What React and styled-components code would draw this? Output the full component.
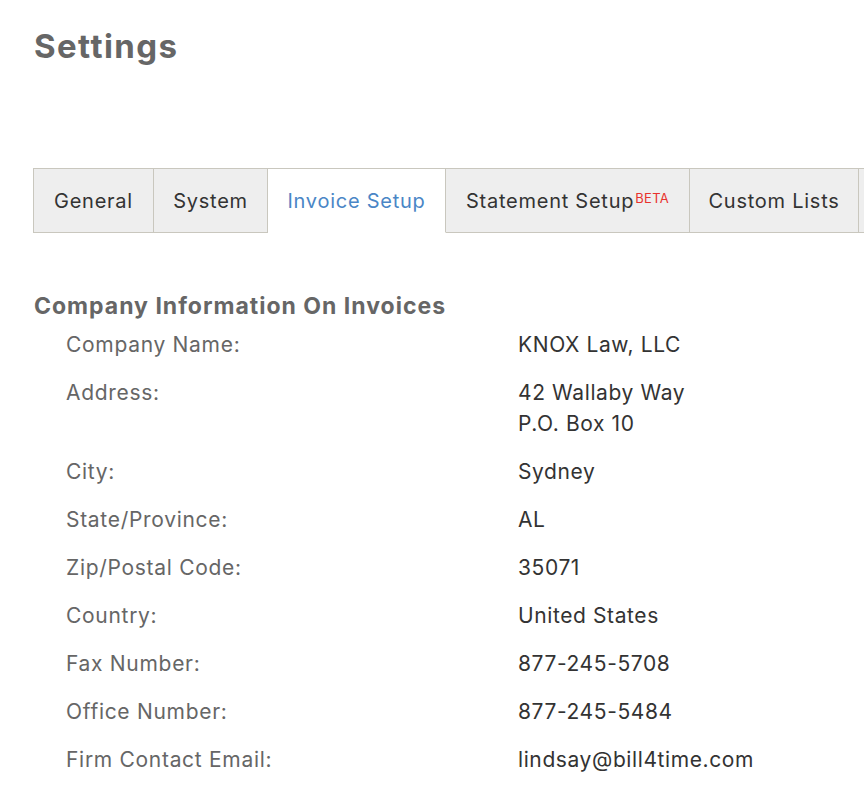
import styled, { createGlobalStyle } from "styled-components";

const GlobalStyle = createGlobalStyle`
  body {
    margin: 0;
    background: #ffffff;
    font-family: Inter, "Open Sans", sans-serif;
    overflow: hidden;
  }
`;

const Page = styled.div`
  width: 864px;
  height: 806px;
  padding: 24px 0 0 34px;
  box-sizing: border-box;
  overflow: hidden;
`;

const Title = styled.h1`
  margin: 0;
  font-size: 33px;
  font-weight: 700;
  letter-spacing: 1.4px;
  color: #666666;
  line-height: 44px;
`;

const TabBar = styled.div`
  display: flex;
  margin: 100px 0 0 -1px;
  border-top: 1px solid #c9c7be;
  border-left: 1px solid #c9c7be;
  width: max-content;
`;

const Tab = styled.div`
  width: ${(p) => p.$w}px;
  height: 64px;
  box-sizing: border-box;
  display: flex;
  align-items: center;
  justify-content: center;
  font-size: 20px;
  letter-spacing: 0.75px;
  color: ${(p) => (p.$active ? "#4a86c6" : "#333333")};
  background: ${(p) => (p.$active ? "#ffffff" : "#eeeeee")};
  border-right: 1px solid #c9c7be;
  border-bottom: 1px solid ${(p) => (p.$active ? "transparent" : "#c9c7be")};
  white-space: nowrap;
`;

const Beta = styled.span`
  font-size: 13px;
  letter-spacing: 0.3px;
  color: #e8322d;
  margin-top: -5px;
  margin-left: 1px;
`;

const Heading = styled.h2`
  margin: 58px 0 0;
  font-size: 23px;
  font-weight: 700;
  letter-spacing: 1px;
  color: #666666;
  line-height: 30px;
`;

const Fields = styled.div`
  display: grid;
  grid-template-columns: 452px 1fr;
  row-gap: 17px;
  margin: 8px 0 0 32px;
  font-size: 21px;
  line-height: 31px;
  letter-spacing: 0.7px;
`;

const Label = styled.div`
  color: #666666;
`;

const Value = styled.div`
  color: #333333;
  letter-spacing: 0.6px;
`;

const fields = [
  ["Company Name:", ["KNOX Law, LLC"]],
  ["Address:", ["42 Wallaby Way", "P.O. Box 10"]],
  ["City:", ["Sydney"]],
  ["State/Province:", ["AL"]],
  ["Zip/Postal Code:", ["35071"]],
  ["Country:", ["United States"]],
  ["Fax Number:", ["877-245-5708"]],
  ["Office Number:", ["877-245-5484"]],
  ["Firm Contact Email:", ["lindsay@bill4time.com"]],
];

const App = () => {
  return (
    <Page>
      <GlobalStyle />
      <Title>Settings</Title>
      <TabBar>
        <Tab $w={120}>General</Tab>
        <Tab $w={114}>System</Tab>
        <Tab $w={178} $active>
          Invoice Setup
        </Tab>
        <Tab $w={244}>
          Statement Setup<Beta>BETA</Beta>
        </Tab>
        <Tab $w={169}>Custom Lists</Tab>
        <Tab $w={40} />
      </TabBar>
      <Heading>Company Information On Invoices</Heading>
      <Fields>
        {fields.map(([label, lines]) => (
          <>
            <Label key={label}>{label}</Label>
            <Value key={label + "v"}>
              {lines.map((l) => (
                <div key={l}>{l}</div>
              ))}
            </Value>
          </>
        ))}
      </Fields>
    </Page>
  );
};

export default App;
